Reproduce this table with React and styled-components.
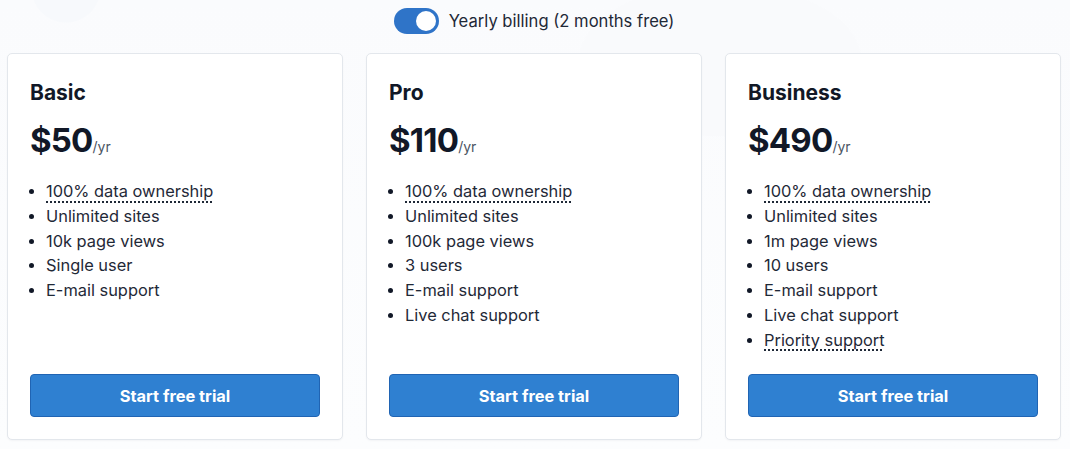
import React, { useState } from "react";
import styled, { createGlobalStyle } from "styled-components";

const GlobalStyle = createGlobalStyle`
  html, body {
    margin: 0;
    padding: 0;
  }
  body {
    font-family: Inter, "Noto Sans", "Liberation Sans", sans-serif;
    color: #1f2937;
    background-color: #ffffff;
    background-image:
      radial-gradient(circle at 66px -12px, #f7f9fc 0, #f7f9fc 34px, transparent 35px),
      radial-gradient(ellipse at 720px 60px, #f9fafc 0, #f9fafc 140px, transparent 142px),
      linear-gradient(180deg, #fafbfd 0, #fcfdfe 100%);
    background-repeat: no-repeat;
    min-height: 449px;
  }
`;

const Page = styled.div`
  padding: 8px 9px 0 7px;
`;

const BillingRow = styled.div`
  display: flex;
  align-items: center;
  justify-content: center;
  gap: 10px;
  height: 26px;
  margin-bottom: 19px;
`;

const Switch = styled.button`
  position: relative;
  width: 45px;
  height: 26px;
  border: none;
  border-radius: 13px;
  padding: 0;
  background: ${(p) => (p.$on ? "#2f74c8" : "#cbd5e1")};
  cursor: pointer;

  &::after {
    content: "";
    position: absolute;
    top: 3px;
    left: ${(p) => (p.$on ? "22px" : "3px")};
    width: 20px;
    height: 20px;
    border-radius: 50%;
    background: #ffffff;
  }
`;

const BillingLabel = styled.span`
  font-size: 16.6px;
  color: #1f2937;
`;

const Plans = styled.div`
  display: grid;
  grid-template-columns: repeat(3, 1fr);
  gap: 23px;
`;

const Card = styled.div`
  display: flex;
  flex-direction: column;
  height: 387px;
  box-sizing: border-box;
  padding: 25px 22px 22px;
  background: #ffffff;
  border: 1px solid #e3e7ec;
  border-radius: 5px;
  box-shadow: 0 1px 2px rgba(15, 23, 42, 0.04);
`;

const PlanName = styled.h2`
  margin: 0;
  font-size: 21px;
  line-height: 28px;
  font-weight: 700;
  color: #111827;
`;

const Price = styled.div`
  margin-top: 12px;
  display: flex;
  align-items: baseline;
  line-height: 42px;
`;

const Amount = styled.span`
  font-size: 33px;
  font-weight: 700;
  color: #111827;
  letter-spacing: -0.8px;
`;

const Period = styled.span`
  font-size: 14px;
  color: #4b5563;
`;

const Features = styled.ul`
  margin: 11px 0 0;
  padding-left: 16px;
  list-style: disc;
  flex: 1;
`;

const Feature = styled.li`
  font-size: 16.4px;
  line-height: 24.8px;
  color: #1f2937;

  &::marker {
    font-size: 15px;
    color: #111827;
  }
`;

const Hint = styled.span`
  text-decoration: underline dotted #1f2937;
  text-decoration-thickness: 1.5px;
  text-underline-offset: 4px;
`;

const TrialButton = styled.button`
  height: 43px;
  width: 100%;
  border: 1px solid #2064b3;
  border-radius: 4px;
  background: #2f80d1;
  color: #ffffff;
  font-family: inherit;
  font-size: 16.4px;
  font-weight: 700;
  cursor: pointer;
`;

const plans = [
  {
    name: "Basic",
    price: "$50",
    features: ["100% data ownership", "Unlimited sites", "10k page views", "Single user", "E-mail support"],
  },
  {
    name: "Pro",
    price: "$110",
    features: [
      "100% data ownership",
      "Unlimited sites",
      "100k page views",
      "3 users",
      "E-mail support",
      "Live chat support",
    ],
  },
  {
    name: "Business",
    price: "$490",
    features: [
      "100% data ownership",
      "Unlimited sites",
      "1m page views",
      "10 users",
      "E-mail support",
      "Live chat support",
      "Priority support",
    ],
  },
];

const hinted = ["100% data ownership", "Priority support"];

export default function App() {
  const [yearly, setYearly] = useState(true);

  return (
    <>
      <GlobalStyle />
      <Page>
        <BillingRow>
          <Switch $on={yearly} onClick={() => setYearly(!yearly)} aria-label="Yearly billing" />
          <BillingLabel>Yearly billing (2 months free)</BillingLabel>
        </BillingRow>
        <Plans>
          {plans.map((plan) => (
            <Card key={plan.name}>
              <PlanName>{plan.name}</PlanName>
              <Price>
                <Amount>{plan.price}</Amount>
                <Period>/yr</Period>
              </Price>
              <Features>
                {plan.features.map((f) => (
                  <Feature key={f}>{hinted.includes(f) ? <Hint>{f}</Hint> : f}</Feature>
                ))}
              </Features>
              <TrialButton>Start free trial</TrialButton>
            </Card>
          ))}
        </Plans>
      </Page>
    </>
  );
}
